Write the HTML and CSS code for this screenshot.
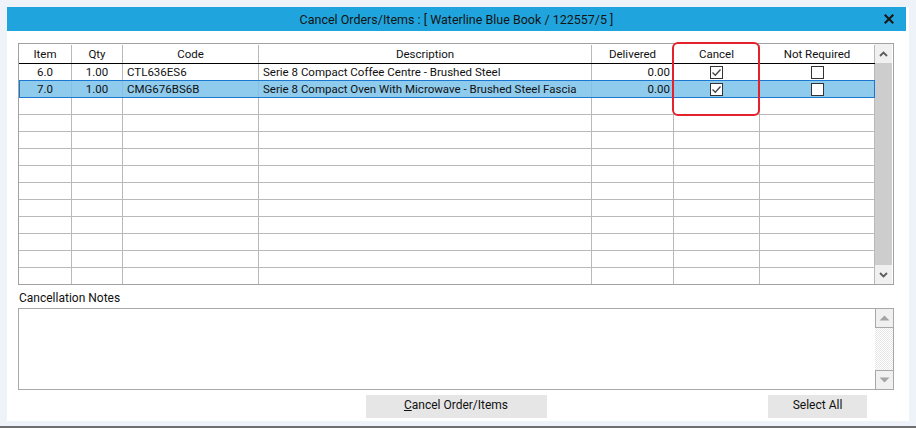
FILE: index.html
```html
<!DOCTYPE html>
<html lang="en">
  <head>
    <meta charset="UTF-8" />
    <title>Cancel Orders/Items</title>
    <link rel="stylesheet" href="styles.css">
  </head>
  <body>
    <div class="frame">
      <div class="dialog">
        <div class="titlebar">
          <span></span>
          <span class="title">Cancel Orders/Items : [ Waterline Blue Book / 122557/5 ]</span>
          <span class="close">
            <svg width="10" height="10" viewBox="0 0 10 10"><path d="M1.5 1.5 L8.5 8.5 M8.5 1.5 L1.5 8.5" stroke="#1a1a1a" stroke-width="2.2" stroke-linecap="square"/></svg>
          </span>
        </div>

        <div class="content">
          <div class="grid-wrap">
            <div class="grid">
              <div class="rows">
                <div class="row head">
                  <div class="cell c">Item</div>
                  <div class="cell c">Qty</div>
                  <div class="cell c">Code</div>
                  <div class="cell c">Description</div>
                  <div class="cell c">Delivered</div>
                  <div class="cell c">Cancel</div>
                  <div class="cell c">Not Required</div>
                </div>
                <div class="row">
                  <div class="cell c">6.0</div>
                  <div class="cell c">1.00</div>
                  <div class="cell l">CTL636ES6</div>
                  <div class="cell l">Serie 8 Compact Coffee Centre - Brushed Steel</div>
                  <div class="cell r">0.00</div>
                  <div class="cell c"><span class="check on"><svg width="11" height="11" viewBox="0 0 11 11"><polyline points="1.5,5.5 4.3,8.3 9.5,2.5" fill="none" stroke="#444" stroke-width="1.3"/></svg></span></div>
                  <div class="cell c"><span class="check"></span></div>
                </div>
                <div class="row selected">
                  <div class="cell c">7.0</div>
                  <div class="cell c">1.00</div>
                  <div class="cell l">CMG676BS6B</div>
                  <div class="cell l">Serie 8 Compact Oven With Microwave - Brushed Steel Fascia</div>
                  <div class="cell r">0.00</div>
                  <div class="cell c"><span class="check on"><svg width="11" height="11" viewBox="0 0 11 11"><polyline points="1.5,5.5 4.3,8.3 9.5,2.5" fill="none" stroke="#444" stroke-width="1.3"/></svg></span></div>
                  <div class="cell c"><span class="check"></span></div>
                </div>
                <div class="row"><div class="cell"></div><div class="cell"></div><div class="cell"></div><div class="cell"></div><div class="cell"></div><div class="cell"></div><div class="cell"></div></div>
                <div class="row"><div class="cell"></div><div class="cell"></div><div class="cell"></div><div class="cell"></div><div class="cell"></div><div class="cell"></div><div class="cell"></div></div>
                <div class="row"><div class="cell"></div><div class="cell"></div><div class="cell"></div><div class="cell"></div><div class="cell"></div><div class="cell"></div><div class="cell"></div></div>
                <div class="row"><div class="cell"></div><div class="cell"></div><div class="cell"></div><div class="cell"></div><div class="cell"></div><div class="cell"></div><div class="cell"></div></div>
                <div class="row"><div class="cell"></div><div class="cell"></div><div class="cell"></div><div class="cell"></div><div class="cell"></div><div class="cell"></div><div class="cell"></div></div>
                <div class="row"><div class="cell"></div><div class="cell"></div><div class="cell"></div><div class="cell"></div><div class="cell"></div><div class="cell"></div><div class="cell"></div></div>
                <div class="row"><div class="cell"></div><div class="cell"></div><div class="cell"></div><div class="cell"></div><div class="cell"></div><div class="cell"></div><div class="cell"></div></div>
                <div class="row"><div class="cell"></div><div class="cell"></div><div class="cell"></div><div class="cell"></div><div class="cell"></div><div class="cell"></div><div class="cell"></div></div>
                <div class="row"><div class="cell"></div><div class="cell"></div><div class="cell"></div><div class="cell"></div><div class="cell"></div><div class="cell"></div><div class="cell"></div></div>
                <div class="row"><div class="cell"></div><div class="cell"></div><div class="cell"></div><div class="cell"></div><div class="cell"></div><div class="cell"></div><div class="cell"></div></div>
                <div class="row"><div class="cell"></div><div class="cell"></div><div class="cell"></div><div class="cell"></div><div class="cell"></div><div class="cell"></div><div class="cell"></div></div>
              </div>
              <div class="vscroll">
                <div class="arrow-btn">
                  <svg width="9" height="6" viewBox="0 0 9 6"><polyline points="1,5 4.5,1.5 8,5" fill="none" stroke="#5c5c5c" stroke-width="1.8"/></svg>
                </div>
                <div class="thumb"></div>
                <div class="arrow-btn">
                  <svg width="9" height="6" viewBox="0 0 9 6"><polyline points="1,1 4.5,4.5 8,1" fill="none" stroke="#5c5c5c" stroke-width="1.8"/></svg>
                </div>
              </div>
            </div>
            <div class="highlight"></div>
          </div>

          <div class="notes-label">Cancellation Notes</div>
          <div class="notes">
            <div class="notes-text"></div>
            <div class="notes-scroll">
              <div class="nbtn">
                <svg width="11" height="6" viewBox="0 0 11 6"><polygon points="0.5,5.5 5.5,0.5 10.5,5.5" fill="#a4a4a4"/></svg>
              </div>
              <div class="ntrack"></div>
              <div class="nbtn">
                <svg width="11" height="6" viewBox="0 0 11 6"><polygon points="0.5,0.5 5.5,5.5 10.5,0.5" fill="#a4a4a4"/></svg>
              </div>
            </div>
          </div>

          <div class="actions">
            <span></span>
            <button class="btn wide"><u>C</u>ancel Order/Items</button>
            <button class="btn small">Select All</button>
          </div>
        </div>
      </div>
    </div>
  </body>
</html>
```

FILE: styles.css
```css
body {
  margin: 0;
  background: #eef3f9;
  font-family: Roboto, 'Liberation Sans', sans-serif;
  font-size: 12px;
  color: #111;
}

.frame {
  height: 428px;
  box-sizing: border-box;
  padding: 7px 7px 5px 7px;
  border-bottom: 2px solid #6e6e6e;
}

.dialog {
  background: #fff;
  height: 414px;
  display: flex;
  flex-direction: column;
  overflow: hidden;
}

.titlebar {
  height: 24px;
  flex: none;
  margin-right: 3px;
  background: #20a4dd;
  display: grid;
  grid-template-columns: 1fr auto 1fr;
  align-items: center;
}

.title {
  font-size: 12.5px;
  color: #141414;
}

.close {
  justify-self: end;
  padding-right: 12px;
  display: flex;
}

.content {
  padding: 12px 15px 0 11px;
}

.grid-wrap {
  position: relative;
}

.grid {
  height: 242px;
  box-sizing: border-box;
  border: 1px solid #a2a2a2;
  display: flex;
  overflow: hidden;
}

.rows {
  width: 856px;
  font-size: 11.5px;
}

.row {
  display: grid;
  grid-template-columns: 53px 51px 136px 333px 82px 86px 115px;
  height: 17px;
  box-sizing: border-box;
  border-bottom: 1px solid #b9b9b9;
}

.row.head {
  height: 20px;
  border-bottom-color: #000;
  padding-top: 1px;
}

.cell {
  border-right: 1px solid #b9b9b9;
  display: flex;
  align-items: center;
  white-space: nowrap;
  overflow: hidden;
  line-height: 15px;
}

.cell.c { justify-content: center; }
.cell.l { padding-left: 4px; }
.cell.r { justify-content: flex-end; padding-right: 3px; }

.row.selected {
  background: #8ecbed;
  border-bottom-color: #1b78d0;
  box-shadow: 0 -1px 0 #1b78d0, inset 1px 0 0 #1b78d0;
}

.row.selected .cell {
  border-right-color: #86bfe2;
}

.row.selected .cell:last-child {
  border-right-color: #1b78d0;
}

.check {
  width: 13px;
  height: 13px;
  box-sizing: border-box;
  border: 1px solid #333;
  background: #fff;
  display: flex;
  align-items: center;
  justify-content: center;
}

.vscroll {
  width: 17px;
  display: flex;
  flex-direction: column;
}

.arrow-btn {
  height: 19px;
  background: #f0f0f0;
  display: flex;
  align-items: center;
  justify-content: center;
}

.thumb {
  flex: 1;
  background: #cdcdcd;
}

.highlight {
  position: absolute;
  left: 654px;
  top: -1px;
  width: 88px;
  height: 74px;
  box-sizing: border-box;
  border: 2px solid #e5212b;
  border-radius: 6px;
}

.notes-label {
  margin-top: 6px;
  padding-left: 1px;
  height: 17px;
  line-height: 14px;
}

.notes {
  height: 82px;
  box-sizing: border-box;
  border: 1px solid #a8a8a8;
  display: flex;
}

.notes-text {
  flex: 1;
}

.notes-scroll {
  width: 18px;
  display: flex;
  flex-direction: column;
}

.nbtn {
  height: 19px;
  box-sizing: border-box;
  border: 1px solid #a8a8a8;
  border-right: none;
  background: #f0f0f0;
  display: flex;
  align-items: center;
  justify-content: center;
}

.nbtn:first-child { border-top: none; }
.nbtn:last-child { border-bottom: none; }

.ntrack {
  flex: 1;
  background: repeating-conic-gradient(#e6e6e6 0 25%, #fff 0 50%) 0 0 / 2px 2px;
}

.actions {
  margin-top: 5px;
  display: grid;
  grid-template-columns: 1fr 181px 1fr;
}

.btn {
  height: 23px;
  border: none;
  background: #e6e6e6;
  font-family: inherit;
  font-size: 12px;
  line-height: 21px;
  color: #111;
  padding: 0 0 2px 0;
}

.btn.small {
  width: 99px;
  justify-self: end;
  margin-right: 27px;
}
```
